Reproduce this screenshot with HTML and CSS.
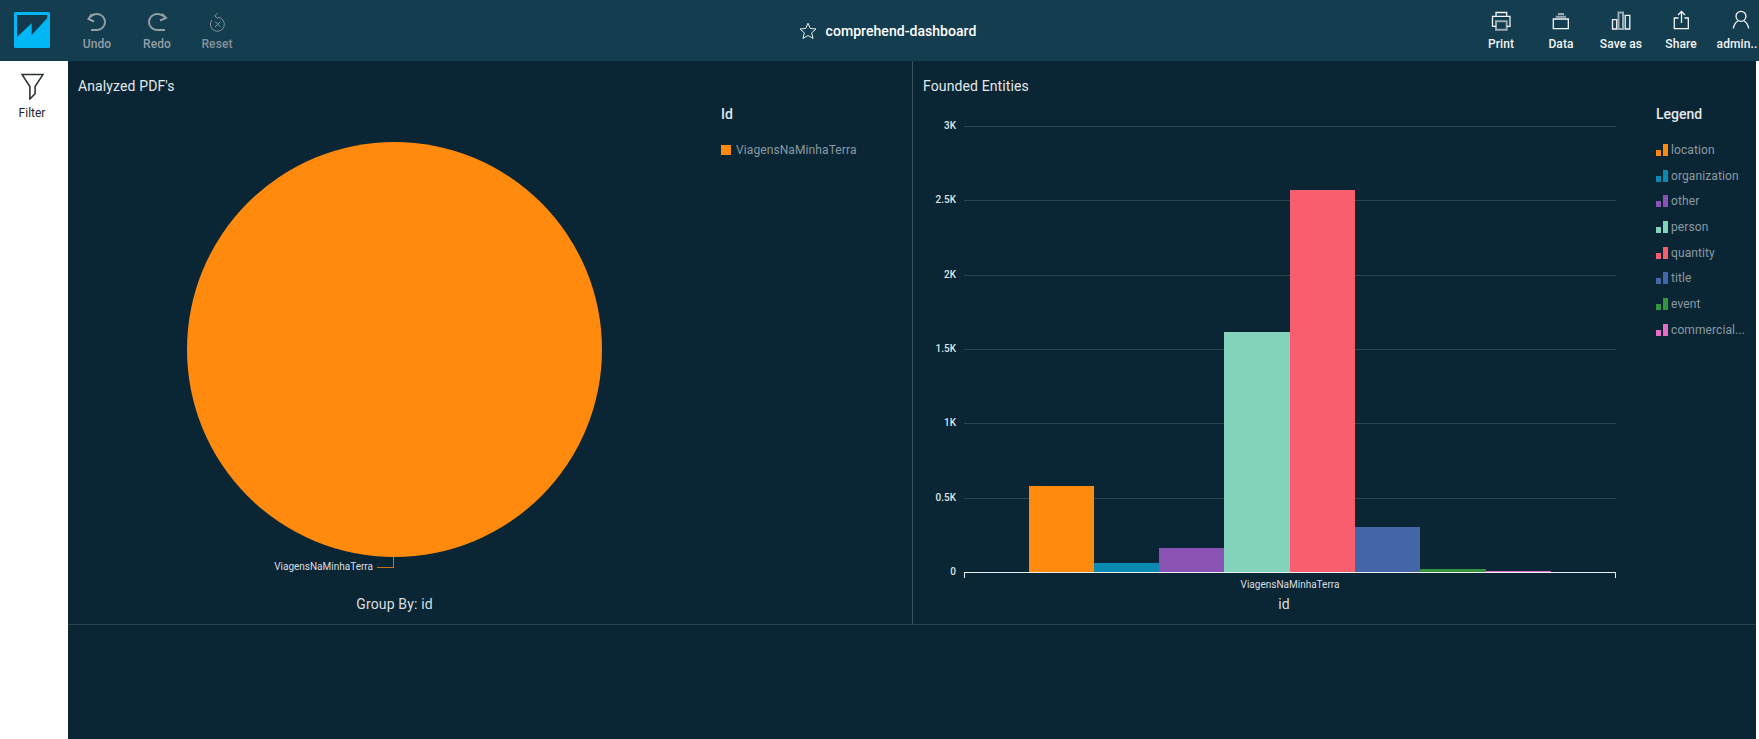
FILE: index.html
```html
<!DOCTYPE html>
<html lang="en">
<head>
<meta charset="utf-8">
<title>comprehend-dashboard</title>
<link rel="stylesheet" href="styles.css">
</head>
<body>
<div class="app">
  <header class="topbar">
    <div class="group">
      <svg class="logo" viewBox="0 0 36 36"><rect width="36" height="36" rx="1.5" fill="#00b7f4"/><path d="M3 3H33.300V6L17.700 23V11.300L3 25Z" fill="#123a4c"/></svg>
      <button class="tool dim">
        <svg class="bold" viewBox="0 0 22 22"><path d="M5.700 4 2.500 9 8 11.500M2.500 9Q6 4 11 4A8 8 0 0 1 11 20H5"/></svg>
        <span>Undo</span>
      </button>
      <button class="tool dim">
        <svg class="bold" viewBox="0 0 22 22"><path d="M16 4 20 8 14 10.500M20 8Q16 4 11 4A8 8 0 0 0 11 20H19"/></svg>
        <span>Redo</span>
      </button>
      <button class="tool dimmer">
        <svg class="thin" viewBox="0 0 22 22"><path d="M12 7.300A7 7 0 1 1 5.800 10M11.500 3 8.500 6 12 8.500M9 11.500 14.500 17M14.500 11.500 9 17"/></svg>
        <span>Reset</span>
      </button>
    </div>
    <div class="title">
      <svg class="star" viewBox="0 0 18 18"><path d="M9 1.200 11.300 6.500 17 7 12.700 10.800 14 16.500 9 13.500 4 16.500 5.300 10.800 1 7 6.700 6.500Z"/></svg>
      <span>comprehend-dashboard</span>
    </div>
    <div class="group end">
      <button class="tool">
        <svg viewBox="0 0 22 22"><path d="M6 6.300V2.500H16.700V6.300M6 16.300H2.500V6.300H20V16.300H16.700"/><path class="soft" d="M6 11.300H16.700V19.700H6Z"/></svg>
        <span>Print</span>
      </button>
      <button class="tool">
        <svg viewBox="0 0 22 22"><path d="M3.300 9H18.300V18.700H3.300Z"/><path class="soft" d="M5.700 6.800H16M8 4H14"/></svg>
        <span>Data</span>
      </button>
      <button class="tool">
        <svg viewBox="0 0 22 22"><path d="M2.500 9.700H6.700V19H2.500ZM15.200 5.300H19.800V19H15.200Z"/><path class="soft" d="M8.500 2.500H13V19H8.500Z"/></svg>
        <span>Save as</span>
      </button>
      <button class="tool">
        <svg viewBox="0 0 22 22"><path d="M8.500 8H4.300V18.700H18.300V8H14.500M11.500 13V1.500M8 5 11.500 1.500 15 5"/></svg>
        <span>Share</span>
      </button>
      <button class="tool last">
        <svg viewBox="0 0 22 22"><circle cx="11" cy="6.300" r="5"/><path d="M3.300 18.500C4 14.500 5.500 12.300 8 11M18.700 18.500C18 14.500 16.500 12.300 14 11"/></svg>
        <span>admin..</span>
      </button>
    </div>
  </header>
  <div class="body">
    <aside class="sidebar">
      <svg class="funnel" viewBox="0 0 24 26"><path d="M2 1.500H22L14.500 13V20L9.500 25V13Z"/></svg>
      <span>Filter</span>
    </aside>
    <main class="dash">
      <div class="row">
        <section class="panel pie-panel">
          <h2 class="panel-title">Analyzed PDF's</h2>
          <div class="pie-body">
            <div class="pie-plot">
              <div class="pie">
                <span class="leader"></span>
                <span class="pie-label">ViagensNaMinhaTerra</span>
              </div>
              <div class="axis-title group-by">Group By: id</div>
            </div>
            <div class="legend pie-legend">
              <h3>Id</h3>
              <div class="legend-item"><i class="square"></i>ViagensNaMinhaTerra</div>
            </div>
          </div>
        </section>
        <section class="panel bar-panel">
          <h2 class="panel-title">Founded Entities</h2>
          <div class="bar-body">
            <div class="bar-chart">
              <div class="plot">
                <div class="grid" style="bottom:100%"><b>3K</b></div>
                <div class="grid" style="bottom:83.33%"><b>2.5K</b></div>
                <div class="grid" style="bottom:66.67%"><b>2K</b></div>
                <div class="grid" style="bottom:50%"><b>1.5K</b></div>
                <div class="grid" style="bottom:33.33%"><b>1K</b></div>
                <div class="grid" style="bottom:16.67%"><b>0.5K</b></div>
                <div class="grid zero" style="bottom:0"><b>0</b></div>
                <div class="bars">
                  <div class="bar" style="height:86px;background:#ff8a0d"></div>
                  <div class="bar" style="height:9px;background:#0a8ab2"></div>
                  <div class="bar" style="height:24px;background:#8a52b3"></div>
                  <div class="bar" style="height:240px;background:#83d3ba"></div>
                  <div class="bar" style="height:382px;background:#f95e6f"></div>
                  <div class="bar" style="height:45px;background:#4465a8"></div>
                  <div class="bar" style="height:3px;background:#35953f"></div>
                  <div class="bar" style="height:1px;background:#e56cc7"></div>
                </div>
              </div>
              <div class="category">ViagensNaMinhaTerra</div>
              <div class="axis-title">id</div>
            </div>
            <div class="legend bar-legend">
              <h3>Legend</h3>
              <div class="legend-item"><i class="mini" style="color:#ff8a0d"></i>location</div>
              <div class="legend-item"><i class="mini" style="color:#0a8ab2"></i>organization</div>
              <div class="legend-item"><i class="mini" style="color:#8a52b3"></i>other</div>
              <div class="legend-item"><i class="mini" style="color:#83d3ba"></i>person</div>
              <div class="legend-item"><i class="mini" style="color:#f95e6f"></i>quantity</div>
              <div class="legend-item"><i class="mini" style="color:#4465a8"></i>title</div>
              <div class="legend-item"><i class="mini" style="color:#35953f"></i>event</div>
              <div class="legend-item"><i class="mini" style="color:#e56cc7"></i>commercial...</div>
            </div>
          </div>
        </section>
      </div>
    </main>
  </div>
</div>
</body>
</html>
```
FILE: styles.css
```css
* { box-sizing: border-box; }
html, body { margin: 0; height: 100%; background: #fff; overflow: hidden; }
body { font-family: Roboto, "Noto Sans", sans-serif; }
.app { display: flex; flex-direction: column; width: 1759px; height: 739px; }

.topbar { flex: 0 0 61px; display: grid; grid-template-columns: 1fr auto 1fr; background: #143d4f; color: #f2f5f6; }
.group { display: flex; align-items: flex-start; }
.group.end { justify-content: flex-end; }
.logo { width: 36px; height: 36px; margin: 12px 17px 0 14px; }
.tool { width: 60px; height: 61px; padding: 10px 0 0; border: 0; background: none; color: inherit; font: 500 12px/16px Roboto, sans-serif; letter-spacing: .1px; display: flex; flex-direction: column; align-items: center; gap: 4px; white-space: nowrap; }
.tool svg { width: 22px; height: 22px; fill: none; stroke: currentColor; stroke-width: 1.300; }
.tool svg.bold { stroke-width: 2; }
.tool svg.thin { stroke-width: 1; }
.soft { stroke-opacity: .6; stroke-width: 2; }
.tool.dim { color: #939fa6; }
.tool.dimmer { color: #869198; }
.tool.last { width: 48px; padding-left: 4px; align-items: center; }
.tool.last svg { margin-left: 8px; }
.title { display: flex; align-items: center; gap: 9px; height: 61px; padding-left: 16px; font-size: 14px; font-weight: 500; letter-spacing: .05px; color: #fff; }
.star { width: 18px; height: 18px; fill: none; stroke: #e8edef; stroke-width: 1; }

.body { flex: 1; display: flex; min-height: 0; }
.sidebar { flex: 0 0 68px; display: flex; flex-direction: column; align-items: center; padding: 12px 4px 0 0; font-size: 12px; line-height: 16px; font-weight: 400; color: #1d2529; gap: 5px; background: #fff; }
.funnel { width: 25px; height: 27px; fill: none; stroke: #2a2f33; stroke-width: 1.500; }
.dash { flex: 0 0 1688px; background: #0a2634; }
.row { display: flex; height: 564px; border-bottom: 1px solid #2b4451; }
.panel { position: relative; color: #e3e8ea; }
.pie-panel { flex: 0 0 845px; border-right: 1px solid #3a515d; }
.bar-panel { flex: 1; }
.panel-title { margin: 0; padding: 16px 0 0 10px; font-size: 14px; line-height: 18px; font-weight: 400; letter-spacing: .12px; height: 42px; }

.pie-body { display: flex; }
.pie-plot { flex: 0 0 653px; display: flex; flex-direction: column; align-items: center; padding: 39px 0 0 0; }
.pie { position: relative; width: 415px; height: 415px; border-radius: 50%; background: #ff8a0d; }
.leader { position: absolute; left: 190px; top: 415px; width: 17px; height: 11px; border-right: 1px solid #c9720f; border-bottom: 1px solid #c9720f; }
.pie-label { position: absolute; right: 229px; top: 418px; font-size: 10px; line-height: 14px; white-space: nowrap; color: #d8dee1; }
.axis-title { font-size: 14px; line-height: 18px; font-weight: 400; letter-spacing: .15px; color: #d9dfe2; text-align: center; }
.group-by { margin-top: 38px; }

.legend h3 { margin: 0 0 13px; padding-top: 1px; font-size: 14px; line-height: 20px; font-weight: 500; color: #e3e8ea; }
.legend-item { display: flex; align-items: center; height: 25.700px; font-size: 12px; letter-spacing: .1px; color: #8a99a2; white-space: nowrap; font-weight: 400; }
.square { width: 10px; height: 10px; margin-right: 5px; background: #ff8a0d; }
.mini { width: 12px; height: 12px; margin-right: 3px; background: linear-gradient(currentColor, currentColor) 0 100% / 5px 6px no-repeat, linear-gradient(currentColor, currentColor) 7px 0 / 5px 12px no-repeat; }

.bar-body { display: flex; }
.bar-chart { flex: 0 0 743px; padding: 24px 0 0 51px; }
.plot { position: relative; width: 652px; height: 446px; }
.grid { position: absolute; left: 0; right: 0; height: 1px; background: #2b4451; }
.grid b { position: absolute; right: 660px; top: -7px; font-size: 10px; line-height: 14px; font-weight: 500; color: #dfe4e7; white-space: nowrap; }
.grid.zero { height: 1px; background: #eef1f2; }
.zero::before, .zero::after { content: ""; position: absolute; top: 0; width: 1px; height: 6px; background: #eef1f2; }
.zero::before { left: 0; }
.zero::after { right: 0; }
.bars { position: absolute; inset: 0 0 1px 64.500px; display: flex; align-items: flex-end; }
.bar { flex: 0 0 65.300px; }
.category { width: 652px; padding-top: 5px; font-size: 10px; line-height: 14px; text-align: center; color: #d8dee1; }
.bar-chart .axis-title { width: 640px; margin-top: 3px; }
```
